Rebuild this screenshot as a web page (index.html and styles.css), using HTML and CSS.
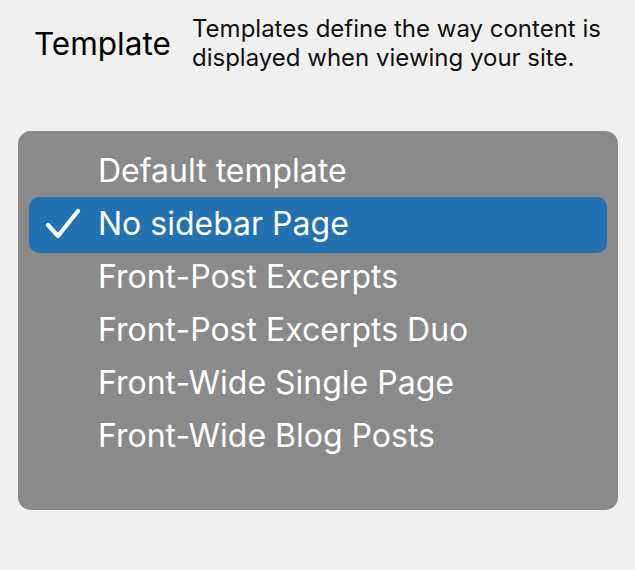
FILE: index.html
```html
<!DOCTYPE html>
<html lang="en">
<head>
  <meta charset="UTF-8">
  <meta name="viewport" content="width=device-width, initial-scale=1.0">
  <title>Template</title>
  <link rel="stylesheet" href="styles.css">
</head>
<body>
  <div class="field">
    <div class="label">Template</div>
    <div class="help">Templates define the way content is displayed when viewing your site.</div>
  </div>

  <ul class="menu">
    <li class="item">Default template</li>
    <li class="item selected">
      <svg class="check" width="36" height="32" viewBox="0 0 36 32">
        <path d="M3 18 L13 29 L33 4" fill="none" stroke="#fff" stroke-width="4.2" stroke-linecap="round" stroke-linejoin="round"/>
      </svg>
      No sidebar Page
    </li>
    <li class="item">Front-Post Excerpts</li>
    <li class="item">Front-Post Excerpts Duo</li>
    <li class="item">Front-Wide Single Page</li>
    <li class="item">Front-Wide Blog Posts</li>
  </ul>
</body>
</html>
```

FILE: styles.css
```css
body {
  margin: 0;
  background: #f0f0f0;
  font-family: Inter, "Noto Sans", sans-serif;
  color: #000;
}
.field {
  display: flex;
  align-items: center;
  padding: 14px 0 0 34px;
}
.label {
  font-size: 31.5px;
  width: 158px;
  flex-shrink: 0;
}
.help {
  font-size: 24px;
  line-height: 29px;
  width: 440px;
  color: #111;
}
.menu {
  list-style: none;
  margin: 59px 0 0 18px;
  padding: 13px 11px 48px;
  width: 578px;
  background: #8a8a8a;
  border-radius: 13px;
}
.item {
  position: relative;
  height: 53px;
  line-height: 53px;
  padding-left: 69px;
  font-size: 32px;
  color: #fff;
  border-radius: 10px;
}
.selected {
  background: #2271b1;
  padding-bottom: 3px;
  margin-bottom: -3px;
}
.check {
  position: absolute;
  left: 16px;
  top: 10px;
}
```
